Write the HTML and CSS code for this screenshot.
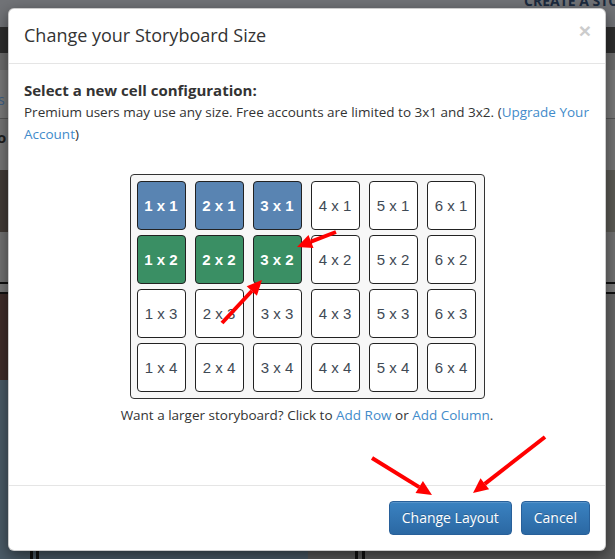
FILE: index.html
```html
<!DOCTYPE html>
<html lang="en">
<head>
<meta charset="utf-8">
<title>Change your Storyboard Size</title>
<link rel="stylesheet" href="styles.css">
</head>
<body>
<div class="page">
  <div class="bg-top"><span class="bg-brand">CREATE A STORYBOARD</span></div>
  <div class="bg-nav"></div>
  <div class="bg-sub"></div>
  <div class="bg-row1"><span class="bg-link">s</span></div>
  <div class="bg-rule"></div>
  <div class="bg-row2"><span class="bg-bold">o</span></div>
  <div class="bg-split bg-img"><div class="bg-l"></div><div class="bg-r"></div></div>
  <div class="bg-row3"></div>
  <div class="bg-lines"></div>
  <div class="bg-split bg-shelf"><div class="bg-l"></div><div class="bg-r"></div></div>
  <div class="bg-split bg-bottom"><div class="bg-l"><i class="bar b1"></i><i class="bar b2"></i></div><div class="bg-r"><i class="bar b3"></i><i class="bar b4"></i></div></div>
</div>

<div class="modal">
  <div class="modal-header">
    <h4 class="modal-title">Change your Storyboard Size</h4>
    <span class="close">&times;</span>
  </div>
  <div class="modal-body">
    <div class="lead">Select a new cell configuration:</div>
    <p class="info">Premium users may use any size. Free accounts are limited to 3x1 and 3x2. (<a href="#">Upgrade Your Account</a>)</p>
    <div class="grid">
      <div class="cell free">1 x 1</div>
      <div class="cell free">2 x 1</div>
      <div class="cell free">3 x 1</div>
      <div class="cell">4 x 1</div>
      <div class="cell">5 x 1</div>
      <div class="cell">6 x 1</div>
      <div class="cell sel">1 x 2</div>
      <div class="cell sel">2 x 2</div>
      <div class="cell sel">3 x 2</div>
      <div class="cell">4 x 2</div>
      <div class="cell">5 x 2</div>
      <div class="cell">6 x 2</div>
      <div class="cell">1 x 3</div>
      <div class="cell">2 x 3</div>
      <div class="cell">3 x 3</div>
      <div class="cell">4 x 3</div>
      <div class="cell">5 x 3</div>
      <div class="cell">6 x 3</div>
      <div class="cell">1 x 4</div>
      <div class="cell">2 x 4</div>
      <div class="cell">3 x 4</div>
      <div class="cell">4 x 4</div>
      <div class="cell">5 x 4</div>
      <div class="cell">6 x 4</div>
    </div>
    <p class="caption">Want a larger storyboard? Click to <a href="#">Add Row</a> or <a href="#">Add Column</a>.</p>
  </div>
  <div class="modal-footer">
    <button class="btn">Change Layout</button>
    <button class="btn">Cancel</button>
  </div>
</div>

<svg class="arrows" width="615" height="559" viewBox="0 0 615 559">
  <g stroke="#ff0000" stroke-width="4" stroke-linecap="butt" fill="none">
    <line x1="336" y1="232" x2="311" y2="241.6"/>
    <line x1="222" y1="323" x2="251.8" y2="291"/>
    <line x1="372" y1="458" x2="419.2" y2="487.1"/>
    <line x1="545" y1="437" x2="484.8" y2="483.8"/>
  </g>
  <g fill="#ff0000">
    <polygon points="297,247 308.5,235.1 313.5,248.1"/>
    <polygon points="262,280 256.9,295.8 246.7,286.2"/>
    <polygon points="432,495 415.5,493.1 422.9,481.1"/>
    <polygon points="473,493 480.5,478.3 489.1,489.3"/>
  </g>
</svg>
</body>
</html>
```

FILE: styles.css
```css
* { box-sizing: border-box; }
html, body { margin: 0; padding: 0; }
body {
  width: 615px;
  height: 559px;
  overflow: hidden;
  position: relative;
  background: #5c5c5c;
  font-family: "Open Sans", "Liberation Sans", sans-serif;
  color: #333;
}

/* dimmed page behind the dialog */
.page { display: flex; flex-direction: column; height: 559px; }
.bg-top { height: 27px; background: #717377; padding-left: 524px; white-space: nowrap; overflow: hidden; }
.bg-brand { display: block; margin-top: -6px; font: 700 14px/14px "Open Sans", sans-serif; color: #1b2a3e; }
.bg-nav { height: 26px; background: #2e2e2e; }
.bg-sub { height: 17px; background: #6d6d6d; }
.bg-row1 { height: 48px; background: #7a7a7a; padding-top: 22px; }
.bg-link { display: block; margin-left: -2px; font-size: 14px; line-height: 16px; color: #3d5f86; }
.bg-rule { height: 1px; background: #575757; }
.bg-row2 { height: 51px; background: #767676; padding-top: 9px; }
.bg-bold { display: block; margin-left: -3px; font: 700 15px/18px "Open Sans", sans-serif; color: #1e1e1e; }
.bg-split { display: flex; }
.bg-split .bg-l, .bg-split .bg-r { flex: 1; position: relative; }
.bg-img { height: 62px; }
.bg-img .bg-l { background: #433c37; }
.bg-img .bg-r { background: #5c5b55; }
.bg-row3 { height: 50px; background: #727272; }
.bg-lines { height: 12px; background: #7a7a7a; border-top: 2px solid #111; border-bottom: 2px solid #111; }
.bg-shelf { height: 86px; }
.bg-shelf .bg-l { background: #3f2d2a; }
.bg-shelf .bg-r { background: #676767; }
.bg-bottom { flex: 1; }
.bg-bottom .bg-l { background: #4b5b67; }
.bg-bottom .bg-r { background: #5a5a5a; }
.bar { position: absolute; bottom: 0; width: 3px; height: 20px; background: #111; }
.b1 { left: 30px; }
.b2 { left: 36px; }
.b3 { left: 47px; }
.b4 { left: 54px; }

/* dialog */
.modal {
  position: absolute;
  left: 8px;
  top: 8px;
  width: 598px;
  background: #fff;
  border: 1px solid rgba(0,0,0,0.2);
  border-radius: 6px;
  box-shadow: 0 5px 15px rgba(0,0,0,0.5);
  display: flex;
  flex-direction: column;
}
.modal-header {
  display: flex;
  justify-content: space-between;
  align-items: flex-start;
  padding: 15px 15px 17px 15px;
  border-bottom: 1px solid #e5e5e5;
}
.modal-title {
  margin: 0;
  font-size: 18px;
  line-height: 22px;
  font-weight: 400;
  color: #333;
}
.close {
  font: 700 21px/20px "Liberation Sans", sans-serif;
  color: #cccccc;
  margin-top: -3px;
  margin-right: -1px;
}
.modal-body {
  height: 421px;
  padding: 15px;
  display: flex;
  flex-direction: column;
}
.lead {
  font-size: 15px;
  font-weight: 700;
  line-height: 22px;
  color: #333;
}
.info {
  margin: 0;
  font-size: 13.5px;
  line-height: 22px;
  color: #333;
}
a { color: #428bca; text-decoration: none; }
.grid {
  margin: 29px auto 0;
  display: grid;
  grid-template-columns: repeat(6, 49px);
  grid-auto-rows: 49px;
  column-gap: 9px;
  row-gap: 5px;
  padding: 6px 8px 6px 6px;
  background: #f7f7f7;
  border: 1px solid #333;
  border-radius: 4px;
}
.cell {
  display: flex;
  align-items: center;
  justify-content: center;
  background: #fff;
  border: 1px solid #222;
  border-radius: 4px;
  font-family: "Liberation Sans", Arial, sans-serif;
  font-size: 15px;
  color: #3f4a55;
}
.cell.free { background: #5984b2; color: #fff; font-weight: 700; }
.cell.sel { background: #3a8f64; color: #fff; font-weight: 700; }
.caption {
  margin: 5px 0 0;
  text-align: center;
  font-size: 13.5px;
  line-height: 22px;
  color: #333;
}
.modal-footer {
  display: flex;
  justify-content: flex-end;
  gap: 9px;
  padding: 15px;
  border-top: 1px solid #e5e5e5;
}
.btn {
  font-family: "Open Sans", sans-serif;
  font-size: 14px;
  line-height: 20px;
  padding: 6px 12px;
  color: #fff;
  background-image: linear-gradient(to bottom, #3a82c1 0%, #2b68a3 100%);
  border: 1px solid #28609a;
  border-radius: 4px;
  text-shadow: 0 -1px 0 rgba(0,0,0,0.2);
  box-shadow: inset 0 1px 0 rgba(255,255,255,0.15);
}

.arrows { position: absolute; left: 0; top: 0; pointer-events: none; }
```
